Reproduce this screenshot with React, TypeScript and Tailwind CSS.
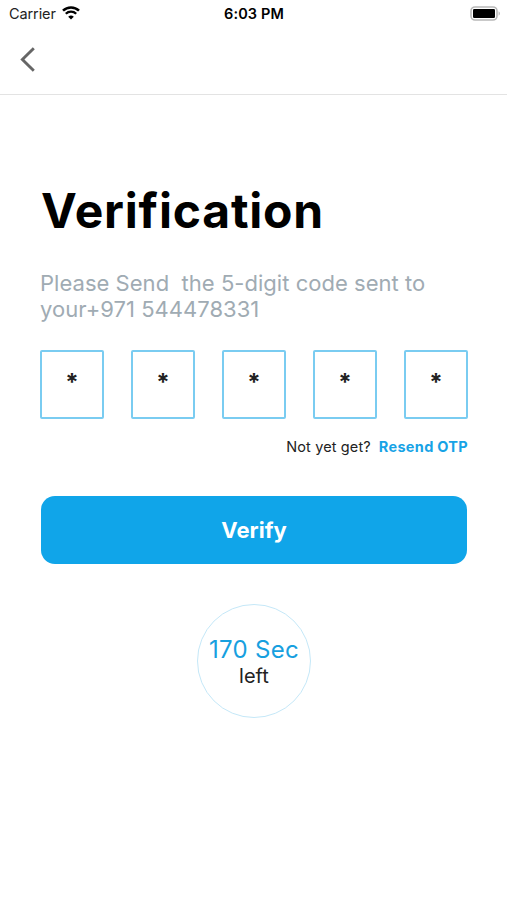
import { useState } from 'react';

const CODE_LENGTH = 5;

const StatusBar = () => (
  <div className="grid h-7 grid-cols-3 items-center pl-[9px] pr-[6px] text-[14.5px] leading-7 text-[#222]">
    <div className="flex items-center gap-[6px]">
      <span className="tracking-[-0.1px]">Carrier</span>
      <svg className="-mt-[2px]" width="18" height="14" viewBox="0 0 18 14" fill="none" stroke="#000">
        <path d="M1 4.7a11.3 11.3 0 0 1 16 0" strokeWidth="2.5" />
        <path d="M3.8 7.8a7.4 7.4 0 0 1 10.4 0" strokeWidth="2.3" />
        <path d="M9 13.6 6.2 10.8a4 4 0 0 1 5.6 0z" fill="#000" stroke="none" />
      </svg>
    </div>
    <span className="-ml-[2px] text-center font-semibold tracking-[0.1px] text-black">6:03 PM</span>
    <svg className="-mt-[2px] justify-self-end" width="31" height="15" viewBox="0 0 31 15">
      <rect x="1" y="1" width="26" height="13" rx="4" fill="#fff" stroke="#b8b8b8" strokeWidth="1.6" />
      <rect x="3" y="3" width="22" height="9" rx="1.2" fill="#000" />
      <path d="M28.6 5.3v4.4c1.8-.7 1.8-3.7 0-4.4z" fill="#b8b8b8" />
    </svg>
  </div>
);

const App = () => {
  const [code] = useState('*'.repeat(CODE_LENGTH));
  const [secondsLeft] = useState(170);

  return (
    <div className="min-h-screen bg-white font-['Inter',sans-serif] text-[#222]">
      <StatusBar />

      <header className="flex h-[67px] border-b border-[#e3e3e3] pl-5 pt-[19px]">
        <button type="button" aria-label="Back" className="h-[25px]">
          <svg width="16" height="25" viewBox="0 0 16 25" fill="none" stroke="#666" strokeWidth="2.9">
            <path d="M13.8 1.3 2.4 12.5 13.8 23.7" />
          </svg>
        </button>
      </header>

      <main className="flex flex-col pl-10 pr-[39px] pt-[86px]">
        <h1 className="ml-px whitespace-nowrap text-[48px] font-bold leading-[60px] tracking-[0.8px] text-black">Verification</h1>

        <p className="mt-[29px] whitespace-pre text-[22px] leading-[26px] tracking-[0.03px] text-[#a0abb3]">
          {'Please Send  the 5-digit code sent to\nyour+971 544478331'}
        </p>

        {/* Code inputs */}
        <div className="mt-[28px] flex justify-between">
          {code.split('').map((char, index) => (
            <div key={index} className="flex h-[69px] w-16 items-center justify-center rounded-[2px] border-2 border-[#7accf1] pb-1 text-[24px] font-bold">
              {char}
            </div>
          ))}
        </div>

        <div className="mt-[18px] flex justify-end gap-2 whitespace-nowrap text-[14.5px] leading-5">
          <span className="tracking-[0.13px]">Not yet get?</span>
          <button type="button" className="font-bold tracking-[0.3px] text-[#17a3e6]">Resend OTP</button>
        </div>

        <button type="button" className="ml-px mr-px mt-[39px] h-[68px] rounded-[14px] bg-[#10a5e9] text-[22px] font-bold text-white">
          Verify
        </button>

        {/* Countdown */}
        <div className="mt-10 flex h-[114px] w-[114px] flex-col items-center self-center rounded-full border border-[#c5e8f8] pt-[31px]">
          <span className="whitespace-nowrap text-[24px] leading-[28px] tracking-[0.3px] text-[#17a0df]">{secondsLeft} Sec</span>
          <span className="text-[20px] leading-[24px]">left</span>
        </div>
      </main>
    </div>
  );
};

export default App;
